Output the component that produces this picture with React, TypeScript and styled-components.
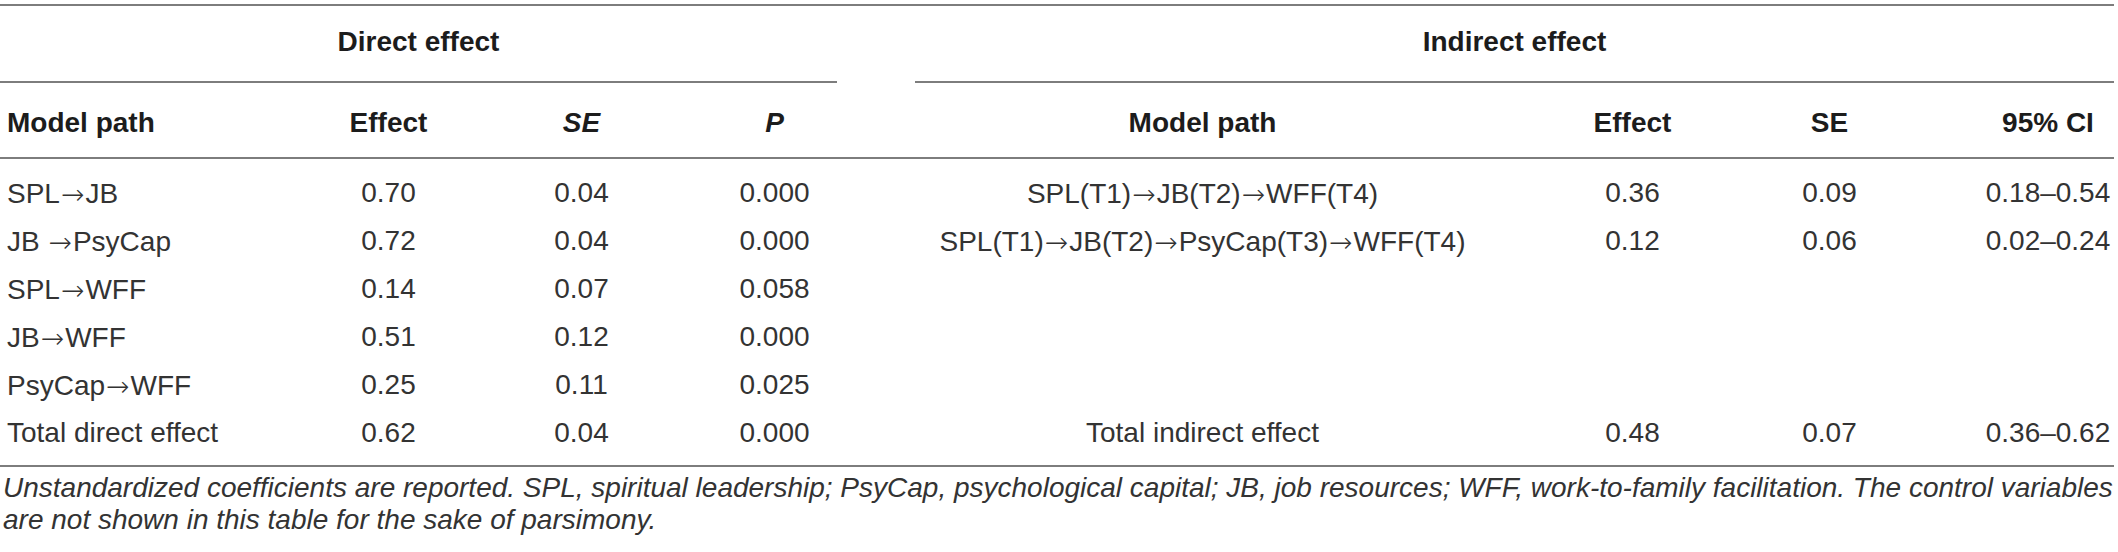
import React from "react";
import styled, { createGlobalStyle, css } from "styled-components";

const GlobalStyle = createGlobalStyle`
  html, body {
    margin: 0;
    padding: 0;
    background: #ffffff;
  }
  body {
    font-family: "Liberation Sans", Arial, Helvetica, sans-serif;
    color: #222222;
  }
`;

const RULE = "#7d7d7d";

const columns = css`
  display: grid;
  grid-template-columns: 292px 193px 193px 193px 663px 197px 197px 1fr;
`;

const Table = styled.div`
  width: 2114px;
  margin-top: 4px;
  border-top: 2px solid ${RULE};
`;

const GroupRow = styled.div`
  ${columns}
`;

const GroupTitle = styled.div<{ $span: string; $ml?: number; $mr?: number }>`
  grid-column: ${(p) => p.$span};
  margin-left: ${(p) => p.$ml ?? 0}px;
  margin-right: ${(p) => p.$mr ?? 0}px;
  box-sizing: border-box;
  height: 77px;
  padding-bottom: 3px;
  display: flex;
  align-items: center;
  justify-content: center;
  border-bottom: 2px solid ${RULE};
  font-size: 28px;
  font-weight: 700;
  color: #1c1c1c;
`;

const HeadRow = styled.div`
  ${columns}
`;

const cellBase = css<{ $left?: boolean; $pl?: number }>`
  display: flex;
  align-items: center;
  justify-content: ${(p) => (p.$left ? "flex-start" : "center")};
  padding-left: ${(p) => p.$pl ?? 0}px;
  white-space: nowrap;
  font-size: 28px;
  box-sizing: border-box;
`;

const HeadCell = styled.div<{ $left?: boolean; $pl?: number; $italic?: boolean }>`
  ${cellBase}
  height: 76px;
  padding-top: 6px;
  border-bottom: 2px solid ${RULE};
  font-weight: 700;
  font-style: ${(p) => (p.$italic ? "italic" : "normal")};
  color: #1c1c1c;
`;

const Body = styled.div`
  ${columns}
  grid-auto-rows: 48px;
  padding: 10px 0 8px;
  border-bottom: 2px solid ${RULE};
`;

const DataCell = styled.div<{ $left?: boolean; $pl?: number }>`
  ${cellBase}
  font-weight: 400;
  color: #333333;
`;

const Arrow = styled.span`
  font-family: "DejaVu Sans", sans-serif;
  font-weight: 300;
  font-size: 28px;
  margin: 0 1px;
  position: relative;
  top: 1px;
`;

const Footnote = styled.p`
  margin: 0;
  padding: 5px 0 0 3px;
  font-size: 28px;
  line-height: 32px;
  font-style: italic;
  color: #333333;
  white-space: nowrap;
`;

type ColSpec = { left?: boolean; pl?: number };

const COLS: ColSpec[] = [
  { left: true, pl: 7 },
  {},
  {},
  {},
  {},
  {},
  {},
  { pl: 54 },
];

const HEADERS: { text: string; italic?: boolean }[] = [
  { text: "Model path" },
  { text: "Effect" },
  { text: "SE", italic: true },
  { text: "P", italic: true },
  { text: "Model path" },
  { text: "Effect" },
  { text: "SE" },
  { text: "95% CI" },
];

const DIRECT: string[][] = [
  ["SPL→JB", "0.70", "0.04", "0.000"],
  ["JB →PsyCap", "0.72", "0.04", "0.000"],
  ["SPL→WFF", "0.14", "0.07", "0.058"],
  ["JB→WFF", "0.51", "0.12", "0.000"],
  ["PsyCap→WFF", "0.25", "0.11", "0.025"],
  ["Total direct effect", "0.62", "0.04", "0.000"],
];

const INDIRECT: (string[] | null)[] = [
  ["SPL(T1)→JB(T2)→WFF(T4)", "0.36", "0.09", "0.18–0.54"],
  ["SPL(T1)→JB(T2)→PsyCap(T3)→WFF(T4)", "0.12", "0.06", "0.02–0.24"],
  null,
  null,
  null,
  ["Total indirect effect", "0.48", "0.07", "0.36–0.62"],
];

function PathText({ text }: { text: string }) {
  const parts = text.split("→");
  return (
    <span>
      {parts.map((part, i) => (
        <React.Fragment key={i}>
          {i > 0 && <Arrow>→</Arrow>}
          {part}
        </React.Fragment>
      ))}
    </span>
  );
}

export default function App() {
  return (
    <>
      <GlobalStyle />
      <Table>
        <GroupRow>
          <GroupTitle $span="1 / 5" $mr={34}>
            Direct effect
          </GroupTitle>
          <GroupTitle $span="5 / 9" $ml={44}>
            Indirect effect
          </GroupTitle>
        </GroupRow>
        <HeadRow>
          {HEADERS.map((h, i) => (
            <HeadCell key={i} $left={COLS[i].left} $pl={COLS[i].pl} $italic={h.italic}>
              {h.text}
            </HeadCell>
          ))}
        </HeadRow>
        <Body>
          {DIRECT.map((row, r) => {
            const right = INDIRECT[r] ?? ["", "", "", ""];
            const cells = [...row, ...right];
            return cells.map((c, i) => (
              <DataCell key={`${r}-${i}`} $left={COLS[i].left} $pl={COLS[i].pl}>
                {c.includes("→") ? <PathText text={c} /> : c}
              </DataCell>
            ));
          })}
        </Body>
        <Footnote>
          Unstandardized coefficients are reported. SPL, spiritual leadership; PsyCap, psychological
          capital; JB, job resources; WFF, work-to-family facilitation. The control variables
          <br />
          are not shown in this table for the sake of parsimony.
        </Footnote>
      </Table>
    </>
  );
}
